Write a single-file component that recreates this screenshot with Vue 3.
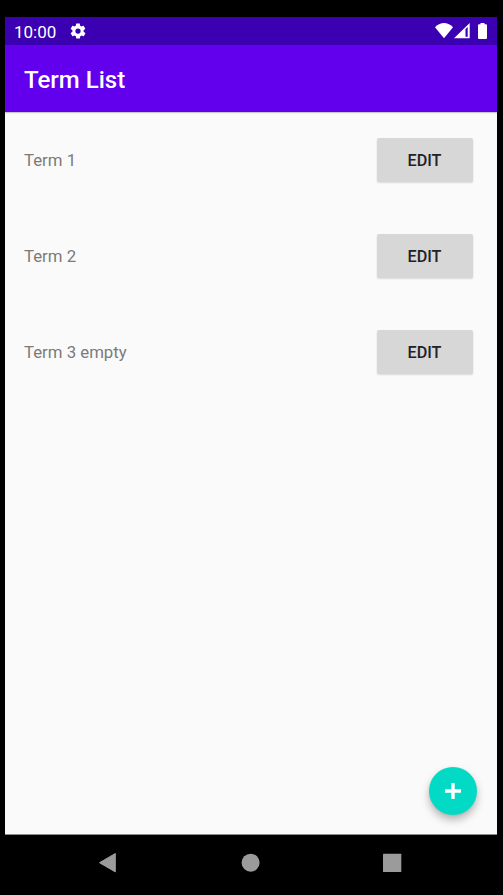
<script setup>
const terms = ['Term 1', 'Term 2', 'Term 3 empty']
</script>

<template>
  <div class="device">
    <div class="screen">
      <header class="status">
        <span class="time">10:00</span>
        <svg class="gear" viewBox="0 0 24 24"><path fill="#fff" d="M19.4 13c0-.3.1-.6.1-1s0-.7-.1-1l2.1-1.6c.2-.2.2-.4.1-.6l-2-3.500c-.1-.2-.4-.3-.6-.2l-2.500 1c-.5-.4-1.100-.7-1.700-1L14.500 2.400c0-.2-.2-.4-.5-.4h-4c-.3 0-.5.2-.5.400L9.100 5.100c-.6.3-1.200.6-1.700 1L5 5.100c-.2-.1-.5 0-.6.2l-2 3.500c-.1.2-.1.400.1.600L4.600 11c0 .3-.1.7-.1 1s0 .7.1 1l-2.100 1.600c-.2.2-.2.400-.1.600l2 3.500c.1.200.4.300.6.200l2.500-1c.5.400 1.100.7 1.700 1l.4 2.700c0 .2.2.4.500.4h4c.3 0 .5-.2.500-.4l.4-2.700c.6-.3 1.200-.6 1.700-1l2.500 1c.2.100.5 0 .6-.2l2-3.500c.1-.2.100-.4-.1-.6L19.400 13zM12 15.500a3.500 3.500 0 1 1 0-7 3.500 3.500 0 0 1 0 7z"/></svg>
        <svg class="signals" viewBox="0 0 54 18">
          <path fill="#fff" d="M0 4.200Q9 -4 18 4.200L9 15.200z"/>
          <path fill="#fff" fill-rule="evenodd" d="M19 15.300L34.700 0V15.300zM30.500 6V13.800H32.700V4z"/>
          <path fill="#fff" d="M45.500 0h4v1.300H51q1 0 1 1V15q0 1-1 1h-7q-1 0-1-1V2.300q0-1 1-1h1.500z"/>
        </svg>
      </header>
      <div class="appbar"><h1>Term List</h1></div>
      <main>
        <div v-for="term in terms" :key="term" class="row">
          <span class="name">{{ term }}</span>
          <button type="button">EDIT</button>
        </div>
        <button type="button" class="fab" aria-label="Add term">
          <svg viewBox="0 0 16 16"><path d="M8 0v16M0 8h16" stroke="#fff" stroke-width="3.400"/></svg>
        </button>
      </main>
    </div>
    <nav>
      <svg viewBox="0 0 503 60">
        <path fill="#9b9b9b" stroke="#9b9b9b" stroke-linejoin="round" d="M99.500 27.700L115.300 18.500V36.900z"/>
        <circle cx="250.600" cy="27.700" r="9" fill="#9b9b9b"/>
        <rect x="383" y="18.700" width="18.300" height="18.300" rx=".5" fill="#9b9b9b"/>
      </svg>
    </nav>
  </div>
</template>

<style>
body { margin: 0; background: #000; }
</style>

<style scoped>
.device { box-sizing: border-box; width: 503px; height: 895px; padding-top: 17px; background: #000; font-family: Roboto, sans-serif; overflow: hidden; }
.screen { display: flex; flex-direction: column; width: 492px; height: 818px; margin-left: 5px; background: #fafafa; }
.status { display: flex; align-items: center; flex: none; height: 28px; background: #3a00b2; color: #fff; }
.time { width: 55px; padding-left: 9px; font-size: 17px; line-height: 28px; padding-top: 1px; box-sizing: border-box; }
.gear { width: 18px; height: 18px; margin-left: 9px; }
.signals { width: 54px; height: 18px; margin: 1px 8px 0 auto; }
.appbar { display: flex; align-items: center; flex: none; height: 67px; padding-left: 19px; background: #6200ee; box-shadow: 0 1px 1px #0003; z-index: 1; }
h1 { margin: 3px 0 0; color: #fff; font-size: 24px; line-height: 28px; font-weight: 500; }
main { position: relative; flex: 1; border-bottom: 1px solid #8b8b8b; }
.row { display: flex; align-items: center; justify-content: space-between; height: 96px; padding: 0 24px 0 19px; }
.row:first-child { margin-top: -1px; }
.name { color: #7b7b7b; font-size: 16.8px; line-height: 22px; padding-top: 1px; }
button { font-family: inherit; border: 0; }
.row button { width: 96px; height: 44px; margin-top: 2px; padding: 0 1px 0 0; border-radius: 2px; background: #d7d7d7; box-shadow: 0 1px 2px #0002; color: #222; font-size: 16.200px; font-weight: 500; }
.fab { position: absolute; right: 20px; bottom: 19px; display: flex; align-items: center; justify-content: center; width: 48px; height: 48px; padding: 0; border-radius: 50%; background: #03dac5; box-shadow: 0 5px 9px #0004, 0 1px 3px #0001; }
.fab svg { width: 16px; height: 16px; }
nav { height: 60px; }
nav svg { display: block; width: 503px; height: 60px; }
</style>
